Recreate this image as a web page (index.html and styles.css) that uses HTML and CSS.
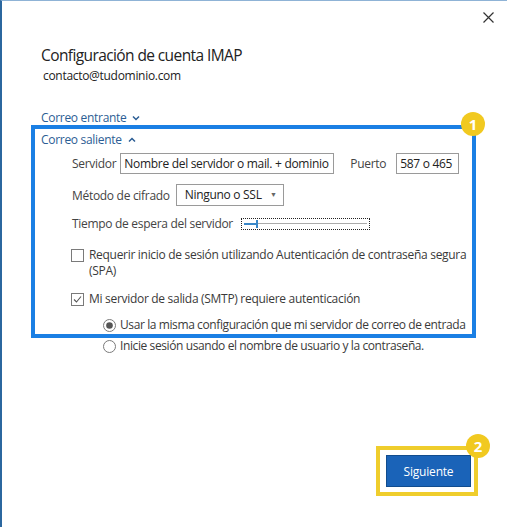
FILE: index.html
```html
<!DOCTYPE html>
<html lang="es">
<head>
    <meta charset="UTF-8">
    <title>Configuración de cuenta IMAP</title>
    <link rel="stylesheet" href="styles.css">
</head>
<body>

<div class="window">
    <div class="topbar">
        <svg class="close" width="11" height="11" viewBox="0 0 11 11">
            <path d="M0.5 0.5 L10.5 10.5 M10.5 0.5 L0.5 10.5" stroke="#333" stroke-width="1.2"/>
        </svg>
    </div>

    <h1 class="title">Configuración de cuenta IMAP</h1>
    <div class="email">contacto@tudominio.com</div>

    <div class="toggle toggle-in">Correo entrante
        <svg width="8" height="6" viewBox="0 0 8 6"><path d="M1 1.5 L4 4.5 L7 1.5" fill="none" stroke="#2b5d94" stroke-width="1.5"/></svg>
    </div>

    <!-- Recuadro azul: correo saliente -->
    <div class="highlight">
        <span class="badge badge-1">1</span>
        <div class="toggle">Correo saliente
            <svg width="8" height="6" viewBox="0 0 8 6"><path d="M1 4.5 L4 1.5 L7 4.5" fill="none" stroke="#2b5d94" stroke-width="1.5"/></svg>
        </div>

        <div class="row row-server">
            <span class="label">Servidor</span>
            <span class="field field-server">Nombre del servidor o mail. + dominio</span>
            <span class="label label-port">Puerto</span>
            <span class="field field-port">587 o 465</span>
        </div>

        <div class="row row-cipher">
            <span class="label">Método de cifrado</span>
            <span class="field select">Ninguno o SSL <span class="arrow">▼</span></span>
        </div>

        <div class="row row-timeout">
            <span class="label">Tiempo de espera del servidor</span>
            <span class="slider">
                <span class="slider-fill"></span>
                <span class="slider-thumb"></span>
                <span class="slider-track"></span>
            </span>
        </div>

        <div class="check check-spa">
            <svg class="box" width="13" height="13" viewBox="0 0 13 13"><rect x="0.5" y="0.5" width="12" height="12" fill="#fff" stroke="#7a7a7a"/></svg>
            <span>Requerir inicio de sesión utilizando Autenticación de contraseña segura (SPA)</span>
        </div>

        <div class="check check-smtp">
            <svg class="box" width="13" height="13" viewBox="0 0 13 13"><rect x="0.5" y="0.5" width="12" height="12" fill="#fff" stroke="#7a7a7a"/><path d="M3 6.5 L5.5 9 L10 3.5" fill="none" stroke="#555" stroke-width="1.1"/></svg>
            <span>Mi servidor de salida (SMTP) requiere autenticación</span>
        </div>

        <div class="radio radio-same">
            <svg width="13" height="13" viewBox="0 0 13 13"><circle cx="6.5" cy="6.5" r="6" fill="#fff" stroke="#7a7a7a"/><circle cx="6.5" cy="6.5" r="3.3" fill="#555"/></svg>
            <span>Usar la misma configuración que mi servidor de correo de entrada</span>
        </div>
    </div>

    <div class="radio radio-user">
        <svg width="13" height="13" viewBox="0 0 13 13"><circle cx="6.5" cy="6.5" r="6" fill="#fff" stroke="#7a7a7a"/></svg>
        <span>Inicie sesión usando el nombre de usuario y la contraseña.</span>
    </div>

    <!-- Botón siguiente -->
    <div class="footer">
        <div class="next-wrap">
            <span class="badge badge-2">2</span>
            <button class="next">Siguiente</button>
        </div>
    </div>
</div>

</body>
</html>
```

FILE: styles.css
```css
body {
    margin: 0;
    background: #fff;
    font-family: "Open Sans", "Noto Sans", sans-serif;
    letter-spacing: -0.3px;
    color: #333;
}
.window {
    height: 527px;
    box-sizing: border-box;
    border-top: 1px solid #8fb3d6;
    border-left: 2px solid #2b679f;
    position: relative;
}
.topbar {
    display: flex;
    justify-content: flex-end;
    padding: 11px 13px 0 0;
    height: 12px;
}
.title {
    margin: 20px 0 0 39px;
    font-size: 15.5px;
    letter-spacing: -0.6px;
    font-weight: normal;
    color: #222;
    line-height: 22px;
}
.email {
    margin: 2px 0 0 41px;
    font-size: 12px;
    line-height: 16px;
    color: #222;
}
.toggle {
    font-size: 12px;
    line-height: 16px;
    color: #2b5d94;
    display: flex;
    align-items: center;
    gap: 6px;
}
.toggle-in {
    margin: 26px 0 0 39px;
}
.highlight {
    position: relative;
    margin: -1px 0 0 29px;
    width: 431px;
    height: 202px;
    border: 4px solid #1a7fe4;
    padding: 3px 0 0 6px;
    box-sizing: content-box;
}
.badge {
    position: absolute;
    width: 24px;
    height: 24px;
    border-radius: 50%;
    background: #f1c920;
    color: #fff;
    font-weight: bold;
    font-size: 15px;
    line-height: 24px;
    text-align: center;
    letter-spacing: 0;
}
.badge-1 {
    top: -17px;
    right: -13px;
    z-index: 0;
}
.highlight .toggle,
.highlight .row,
.highlight .check,
.highlight .radio {
    position: relative;
    z-index: 1;
}
.row {
    display: flex;
    align-items: center;
    margin-left: 31px;
    font-size: 12px;
    color: #444;
}
.label {
    margin-right: 4px;
}
.label-port {
    margin-left: 16px;
    margin-right: 10px;
}
.row-server {
    margin-top: 5px;
    height: 21px;
}
.row-cipher {
    margin-top: 10px;
    height: 22px;
}
.row-timeout {
    margin-top: 7px;
    height: 21px;
}
.field {
    border: 1px solid #9a9a9a;
    height: 19px;
    line-height: 19px;
    padding: 0 3px;
    color: #222;
    white-space: nowrap;
    box-sizing: content-box;
}
.field-server {
    width: 206px;
    overflow: hidden;
}
.field-port {
    width: 55px;
}
.select {
    height: 20px;
    line-height: 20px;
    padding: 0 6px 0 8px;
    width: 92px;
    margin-left: 2px;
    display: flex;
    justify-content: space-between;
}
.arrow {
    font-size: 7px;
    color: #666;
}
.slider {
    width: 123px;
    height: 10px;
    border: 1px dotted #222;
    margin-left: 4px;
    display: flex;
    align-items: center;
    padding: 0 2px;
}
.slider-fill {
    width: 12px;
    height: 2px;
    background: #3a87c8;
}
.slider-thumb {
    width: 2px;
    height: 8px;
    background: #3a87c8;
}
.slider-track {
    flex: 1;
    height: 1px;
    background: #aaa;
}
.check,
.radio {
    display: flex;
    align-items: flex-start;
    gap: 5px;
    font-size: 12px;
    line-height: 16px;
    color: #3a3a3a;
}
.radio {
    gap: 4px;
    white-space: nowrap;
    letter-spacing: -0.4px;
}
.check svg,
.radio svg {
    flex: none;
    margin-top: 2px;
}
.check-spa {
    margin: 13px 0 0 30px;
    width: 405px;
}
.check-smtp {
    margin: 12px 0 0 30px;
}
.radio-same {
    margin: 10px 0 0 62px;
}
.radio-user {
    margin: 0 0 0 101px;
}
.footer {
    display: flex;
    justify-content: flex-end;
    padding-right: 29px;
    margin-top: 92px;
}
.next-wrap {
    position: relative;
    border: 4px solid #efcd2c;
    padding: 5px 3px 5px 6px;
}
.badge-2 {
    top: -16px;
    right: -16px;
    z-index: 1;
}
.next {
    display: block;
    width: 85px;
    height: 32px;
    background: #1a63b8;
    border: 1px solid #114c8e;
    color: #fff;
    font-family: "Open Sans", "Noto Sans", sans-serif;
    letter-spacing: -0.2px;
    font-size: 12px;
    cursor: pointer;
}
```
